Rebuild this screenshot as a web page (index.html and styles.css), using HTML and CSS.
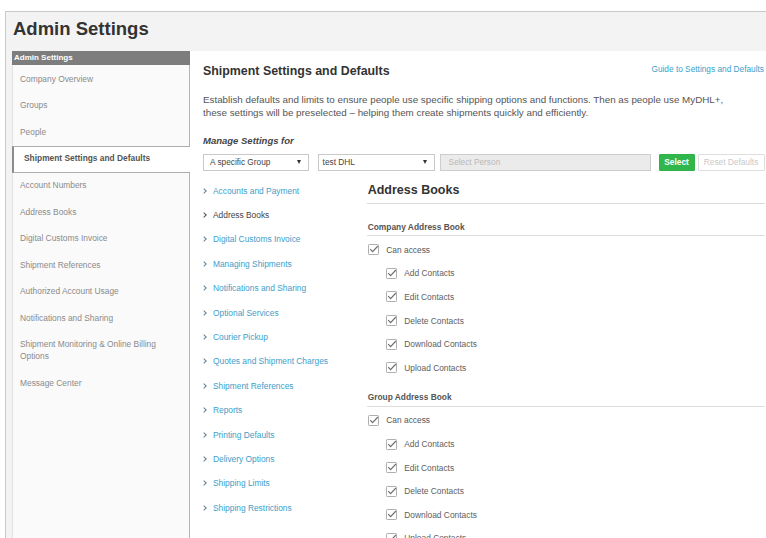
FILE: index.html
```html
<!DOCTYPE html>
<html lang="en">
<head>
<meta charset="utf-8">
<title>Admin Settings</title>
<link rel="stylesheet" href="styles.css">
</head>
<body>
<div class="frame">
  <h1 class="page-title">Admin Settings</h1>
  <div class="layout">
    <aside class="sidebar">
      <div class="sidebar-head">Admin Settings</div>
      <ul class="side-nav">
        <li>Company Overview</li>
        <li>Groups</li>
        <li>People</li>
        <li class="is-current">Shipment Settings and Defaults</li>
        <li>Account Numbers</li>
        <li>Address Books</li>
        <li>Digital Customs Invoice</li>
        <li>Shipment References</li>
        <li>Authorized Account Usage</li>
        <li>Notifications and Sharing</li>
        <li>Shipment Monitoring &amp; Online Billing Options</li>
        <li>Message Center</li>
      </ul>
    </aside>

    <main class="panel">
      <div class="panel-head">
        <h2 class="panel-title">Shipment Settings and Defaults</h2>
        <a class="guide-link" href="#">Guide to Settings and Defaults</a>
      </div>
      <p class="intro">Establish defaults and limits to ensure people use specific shipping options and functions. Then as people use MyDHL+,<br>these settings will be preselected – helping them create shipments quickly and efficiently.</p>

      <div class="manage-label">Manage Settings for</div>
      <div class="filters">
        <div class="select select-scope"><span>A specific Group</span><i class="caret"></i></div>
        <div class="select select-group"><span>test DHL</span><i class="caret"></i></div>
        <div class="person-field">Select Person</div>
        <button class="btn btn-select" type="button">Select</button>
        <button class="btn btn-reset" type="button">Reset Defaults</button>
      </div>

      <div class="settings">
        <ul class="topics">
          <li><svg class="chev" viewBox="0 0 4 6"><polyline points="0.7,0.7 3.2,3 0.7,5.3"/></svg>Accounts and Payment</li>
          <li class="is-active"><svg class="chev" viewBox="0 0 4 6"><polyline points="0.7,0.7 3.2,3 0.7,5.3"/></svg>Address Books</li>
          <li><svg class="chev" viewBox="0 0 4 6"><polyline points="0.7,0.7 3.2,3 0.7,5.3"/></svg>Digital Customs Invoice</li>
          <li><svg class="chev" viewBox="0 0 4 6"><polyline points="0.7,0.7 3.2,3 0.7,5.3"/></svg>Managing Shipments</li>
          <li><svg class="chev" viewBox="0 0 4 6"><polyline points="0.7,0.7 3.2,3 0.7,5.3"/></svg>Notifications and Sharing</li>
          <li><svg class="chev" viewBox="0 0 4 6"><polyline points="0.7,0.7 3.2,3 0.7,5.3"/></svg>Optional Services</li>
          <li><svg class="chev" viewBox="0 0 4 6"><polyline points="0.7,0.7 3.2,3 0.7,5.3"/></svg>Courier Pickup</li>
          <li><svg class="chev" viewBox="0 0 4 6"><polyline points="0.7,0.7 3.2,3 0.7,5.3"/></svg>Quotes and Shipment Charges</li>
          <li><svg class="chev" viewBox="0 0 4 6"><polyline points="0.7,0.7 3.2,3 0.7,5.3"/></svg>Shipment References</li>
          <li><svg class="chev" viewBox="0 0 4 6"><polyline points="0.7,0.7 3.2,3 0.7,5.3"/></svg>Reports</li>
          <li><svg class="chev" viewBox="0 0 4 6"><polyline points="0.7,0.7 3.2,3 0.7,5.3"/></svg>Printing Defaults</li>
          <li><svg class="chev" viewBox="0 0 4 6"><polyline points="0.7,0.7 3.2,3 0.7,5.3"/></svg>Delivery Options</li>
          <li><svg class="chev" viewBox="0 0 4 6"><polyline points="0.7,0.7 3.2,3 0.7,5.3"/></svg>Shipping Limits</li>
          <li><svg class="chev" viewBox="0 0 4 6"><polyline points="0.7,0.7 3.2,3 0.7,5.3"/></svg>Shipping Restrictions</li>
        </ul>

        <section class="detail">
          <h3 class="detail-title">Address Books</h3>

          <div class="group-title">Company Address Book</div>
          <ul class="checks">
            <li class="check"><svg class="box" viewBox="0 0 12 12"><rect x="0.5" y="0.5" width="11" height="11" rx="1"/><polyline points="2.4,5.6 5,8.4 10.8,2.2"/></svg>Can access</li>
            <li class="check sub"><svg class="box" viewBox="0 0 12 12"><rect x="0.5" y="0.5" width="11" height="11" rx="1"/><polyline points="2.4,5.6 5,8.4 10.8,2.2"/></svg>Add Contacts</li>
            <li class="check sub"><svg class="box" viewBox="0 0 12 12"><rect x="0.5" y="0.5" width="11" height="11" rx="1"/><polyline points="2.4,5.6 5,8.4 10.8,2.2"/></svg>Edit Contacts</li>
            <li class="check sub"><svg class="box" viewBox="0 0 12 12"><rect x="0.5" y="0.5" width="11" height="11" rx="1"/><polyline points="2.4,5.6 5,8.4 10.8,2.2"/></svg>Delete Contacts</li>
            <li class="check sub"><svg class="box" viewBox="0 0 12 12"><rect x="0.5" y="0.5" width="11" height="11" rx="1"/><polyline points="2.4,5.6 5,8.4 10.8,2.2"/></svg>Download Contacts</li>
            <li class="check sub"><svg class="box" viewBox="0 0 12 12"><rect x="0.5" y="0.5" width="11" height="11" rx="1"/><polyline points="2.4,5.6 5,8.4 10.8,2.2"/></svg>Upload Contacts</li>
          </ul>

          <div class="group-title">Group Address Book</div>
          <ul class="checks">
            <li class="check"><svg class="box" viewBox="0 0 12 12"><rect x="0.5" y="0.5" width="11" height="11" rx="1"/><polyline points="2.4,5.6 5,8.4 10.8,2.2"/></svg>Can access</li>
            <li class="check sub"><svg class="box" viewBox="0 0 12 12"><rect x="0.5" y="0.5" width="11" height="11" rx="1"/><polyline points="2.4,5.6 5,8.4 10.8,2.2"/></svg>Add Contacts</li>
            <li class="check sub"><svg class="box" viewBox="0 0 12 12"><rect x="0.5" y="0.5" width="11" height="11" rx="1"/><polyline points="2.4,5.6 5,8.4 10.8,2.2"/></svg>Edit Contacts</li>
            <li class="check sub"><svg class="box" viewBox="0 0 12 12"><rect x="0.5" y="0.5" width="11" height="11" rx="1"/><polyline points="2.4,5.6 5,8.4 10.8,2.2"/></svg>Delete Contacts</li>
            <li class="check sub"><svg class="box" viewBox="0 0 12 12"><rect x="0.5" y="0.5" width="11" height="11" rx="1"/><polyline points="2.4,5.6 5,8.4 10.8,2.2"/></svg>Download Contacts</li>
            <li class="check sub"><svg class="box" viewBox="0 0 12 12"><rect x="0.5" y="0.5" width="11" height="11" rx="1"/><polyline points="2.4,5.6 5,8.4 10.8,2.2"/></svg>Upload Contacts</li>
          </ul>
        </section>
      </div>
    </main>
  </div>
</div>
</body>
</html>
```

FILE: styles.css
```css
html, body {
  margin: 0;
  background: #fff;
}

body {
  font-family: "Liberation Sans", Arial, sans-serif;
  height: 538px;
  overflow: hidden;
}

/* outer grey frame */
.frame {
  margin: 11px 0 0 5px;
  border-top: 1px solid #c9c9c9;
  border-left: 1px solid #c9c9c9;
  background: #f3f3f3;
  padding-left: 6px;
  min-height: 560px;
}

.page-title {
  margin: 0;
  padding: 6.3px 0 0 1px;
  font-size: 18.5px;
  line-height: 22px;
  font-weight: bold;
  color: #333;
}

.layout {
  display: flex;
  margin-top: 10.4px;
  min-height: 520px;
}

/* left admin menu */
.sidebar {
  flex: none;
  width: 176px;
  background: #fafafa;
  border-left: 1px solid #e3e3e3;
  border-right: 1px solid #b4b4b4;
}

.sidebar-head {
  margin: 0 -1px;
  padding-left: 2px;
  height: 14.5px;
  line-height: 14.5px;
  background: #7d7d7d;
  color: #fff;
  font-size: 8px;
  font-weight: bold;
}

.side-nav {
  list-style: none;
  margin: 0;
  padding: 1px 0 0;
}

.side-nav li {
  padding: 7.45px 20px 7.45px 7px;
  font-size: 8.4px;
  line-height: 11.7px;
  color: #8a8a8a;
}

.side-nav li.is-current {
  margin: 0 -1px;
  padding: 6.45px 20px 6.45px 10px;
  border-left: 2px solid #8c8c8c;
  border-top: 1px solid #adadad;
  border-bottom: 1px solid #adadad;
  background: #fff;
  color: #555;
  font-weight: bold;
}

/* main settings panel */
.panel {
  flex: 1;
  min-width: 0;
  background: #fff;
  padding: 13.5px 1px 0 13px;
}

.panel-head {
  display: flex;
  justify-content: space-between;
  align-items: center;
}

.panel-title {
  margin: 0;
  font-size: 12.4px;
  line-height: 15px;
  font-weight: bold;
  color: #333;
}

.guide-link {
  margin: 0 1px 5px 0;
  font-size: 8.3px;
  color: #3a9fcb;
  text-decoration: none;
}

.intro {
  margin: 13.6px 0 0;
  font-size: 9.8px;
  line-height: 13px;
  color: #555;
}

.manage-label {
  margin-top: 15.9px;
  font-size: 9.5px;
  line-height: 12px;
  font-weight: bold;
  font-style: italic;
  color: #444;
}

.filters {
  display: flex;
  margin-top: 7.6px;
  height: 16.4px;
}

.select,
.person-field,
.btn {
  box-sizing: border-box;
  height: 16.4px;
  font-family: inherit;
  font-size: 8.3px;
}

.select {
  display: flex;
  align-items: center;
  justify-content: space-between;
  padding: 0 7px 0 6px;
  border: 1px solid #c9c9c9;
  background: #fff;
  color: #444;
}

.select-scope {
  width: 105.6px;
  margin-right: 9px;
}

.select-group {
  width: 117px;
  margin-right: 5px;
  padding-left: 4px;
}

.caret {
  width: 0;
  height: 0;
  border-left: 2.5px solid transparent;
  border-right: 2.5px solid transparent;
  border-top: 4px solid #333;
}

.person-field {
  display: flex;
  align-items: center;
  width: 211.4px;
  margin-right: 7.6px;
  padding-left: 8px;
  border: 1px solid #cdcdcd;
  background: #ebebeb;
  color: #b9b9b9;
}

.btn {
  padding: 0;
  border-radius: 1px;
  text-align: center;
}

.btn-select {
  width: 36px;
  margin-right: 3px;
  border: 1px solid #2fb34a;
  background: #31b64b;
  color: #fff;
  font-weight: bold;
  font-size: 8.4px;
}

.btn-reset {
  width: 67px;
  border: 1px solid #dedede;
  background: #fff;
  color: #c9c9c9;
}

/* topic list + detail */
.settings {
  display: flex;
  margin-top: 7.8px;
}

.topics {
  flex: none;
  width: 163.7px;
  list-style: none;
  margin: 0;
  padding: 0;
}

.topics li {
  display: flex;
  align-items: center;
  height: 24.4px;
  font-size: 8.4px;
  color: #3d9ec9;
}

.topics li.is-active {
  color: #444;
}

.chev {
  width: 4px;
  height: 6px;
  margin: 0 5.7px 0 0.3px;
  fill: none;
  stroke: #6a8493;
  stroke-width: 1.1;
}

.topics li.is-active .chev {
  stroke: #555;
}

.detail {
  flex: 1;
  min-width: 0;
  padding-top: 4.7px;
}

.detail-title {
  margin: 0 0 16.4px;
  padding: 0 0 5px 1px;
  font-size: 12.5px;
  line-height: 15px;
  font-weight: bold;
  color: #333;
  border-bottom: 1px solid #dcdcdc;
}

.group-title {
  padding: 0 0 2.4px 1px;
  font-size: 8.4px;
  line-height: 12px;
  font-weight: bold;
  color: #555;
  border-bottom: 1px solid #dedede;
}

.checks {
  list-style: none;
  margin: 0 0 11.8px;
  padding: 2px 0 0 1px;
}

.check {
  display: flex;
  align-items: center;
  height: 23.6px;
  font-size: 8.4px;
  color: #555;
}

.check.sub {
  padding-left: 18px;
  color: #5e5e5e;
}

.box {
  flex: none;
  width: 11px;
  height: 11px;
  margin-right: 7.6px;
}

.box rect {
  fill: #fff;
  stroke: #a3a3a3;
}

.box polyline {
  fill: none;
  stroke: #6f6f6f;
  stroke-width: 1.3;
}
```
